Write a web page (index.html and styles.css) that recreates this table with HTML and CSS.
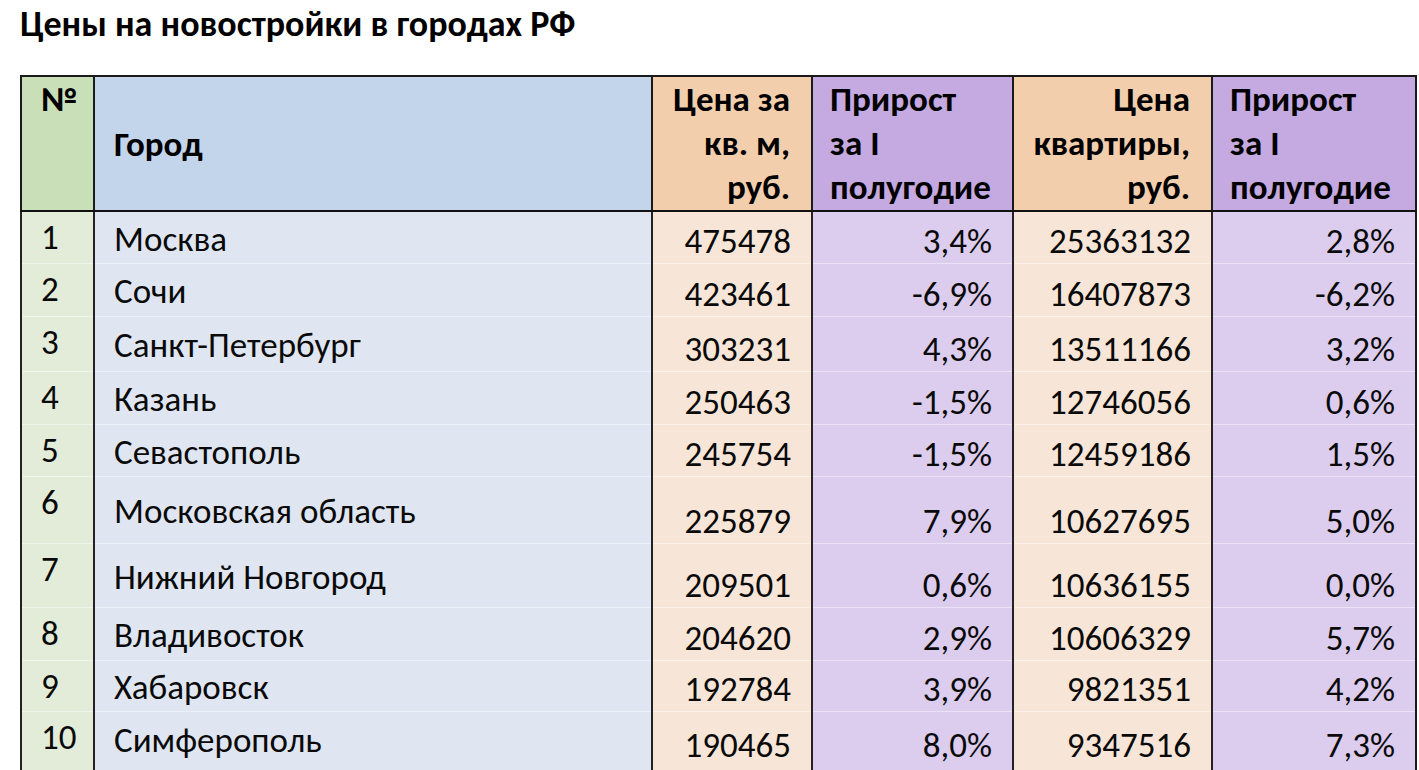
FILE: index.html
```html
<!DOCTYPE html>
<html lang="ru">
<head>
<meta charset="utf-8">
<title>Цены на новостройки в городах РФ</title>
<link rel="stylesheet" href="styles.css">
</head>
<body>
<div class="page">
  <h1 class="title">Цены на новостройки в городах РФ</h1>
  <table class="prices">
    <colgroup>
      <col class="w-num"><col class="w-city"><col class="w-price"><col class="w-grow"><col class="w-flat"><col class="w-grow2">
    </colgroup>
    <thead>
      <tr>
        <th class="h-num">№</th>
        <th class="h-city">Город</th>
        <th class="h-price">Цена за<br>кв. м,<br>руб.</th>
        <th class="h-grow">Прирост<br>за I<br>полугодие</th>
        <th class="h-price">Цена<br>квартиры,<br>руб.</th>
        <th class="h-grow">Прирост<br>за I<br>полугодие</th>
      </tr>
    </thead>
    <tbody>
      <tr class="r52"><td class="num">1</td><td class="city">Москва</td><td class="price">475478</td><td class="grow">3,4%</td><td class="price">25363132</td><td class="grow">2,8%</td></tr>
      <tr class="r53"><td class="num">2</td><td class="city">Сочи</td><td class="price">423461</td><td class="grow">-6,9%</td><td class="price">16407873</td><td class="grow">-6,2%</td></tr>
      <tr class="r55"><td class="num">3</td><td class="city">Санкт-Петербург</td><td class="price">303231</td><td class="grow">4,3%</td><td class="price">13511166</td><td class="grow">3,2%</td></tr>
      <tr class="r53"><td class="num">4</td><td class="city">Казань</td><td class="price">250463</td><td class="grow">-1,5%</td><td class="price">12746056</td><td class="grow">0,6%</td></tr>
      <tr class="r52"><td class="num">5</td><td class="city">Севастополь</td><td class="price">245754</td><td class="grow">-1,5%</td><td class="price">12459186</td><td class="grow">1,5%</td></tr>
      <tr class="r67"><td class="num">6</td><td class="city">Московская область</td><td class="price">225879</td><td class="grow">7,9%</td><td class="price">10627695</td><td class="grow">5,0%</td></tr>
      <tr class="r64"><td class="num">7</td><td class="city">Нижний Новгород</td><td class="price">209501</td><td class="grow">0,6%</td><td class="price">10636155</td><td class="grow">0,0%</td></tr>
      <tr class="r53"><td class="num">8</td><td class="city">Владивосток</td><td class="price">204620</td><td class="grow">2,9%</td><td class="price">10606329</td><td class="grow">5,7%</td></tr>
      <tr class="r51"><td class="num">9</td><td class="city">Хабаровск</td><td class="price">192784</td><td class="grow">3,9%</td><td class="price">9821351</td><td class="grow">4,2%</td></tr>
      <tr class="r-last"><td class="num">10</td><td class="city city-last">Симферополь</td><td class="price price-last">190465</td><td class="grow price-last">8,0%</td><td class="price price-last">9347516</td><td class="grow price-last">7,3%</td></tr>
    </tbody>
  </table>
</div>
</body>
</html>
```

FILE: styles.css
```css
html, body {
  margin: 0;
  padding: 0;
  background: #ffffff;
}

body {
  font-family: Carlito, Calibri, Lato, "Liberation Sans", sans-serif;
  color: #0a0a0a;
}

.page {
  padding: 0 0 0 20px;
}

.title {
  margin: 0;
  font-size: 36px;
  line-height: 48px;
  font-weight: 700;
  color: #000;
}

.prices {
  margin-top: 27px;
  border-collapse: collapse;
  table-layout: fixed;
  width: 1395px;
  font-size: 35px;
  border: 2px solid #1a1a1a;
}

.w-num { width: 73px; }
.w-city { width: 558px; }
.w-price { width: 160px; }
.w-grow { width: 201px; }
.w-flat { width: 199px; }
.w-grow2 { width: 204px; }

.prices th {
  font-weight: 700;
  line-height: 44px;
  height: 133px;
  padding: 0 19px 0 19px;
  border-left: 2px solid #1a1a1a;
  border-bottom: 2px solid #111;
  white-space: nowrap;
  color: #000;
}

.h-num {
  background: #c9dfb7;
  vertical-align: top;
  text-align: left;
}

.h-city {
  background: #c3d5eb;
  vertical-align: middle;
  text-align: left;
}

.h-price {
  background: #f3cead;
  vertical-align: top;
  text-align: right;
}

.prices th.h-price {
  padding-right: 21px;
}

.prices th.h-grow {
  padding-left: 17px;
}

.h-grow {
  background: #c5a9e1;
  vertical-align: top;
  text-align: left;
}

.prices td {
  line-height: 40px;
  padding: 0 19px;
  border-left: 2px solid #222;
  border-top: 1px solid rgba(255, 255, 255, 0.45);
  white-space: nowrap;
}

.r51 { height: 51px; }
.r52 { height: 52px; }
.r53 { height: 53px; }
.r55 { height: 55px; }
.r64 { height: 64px; }
.r67 { height: 67px; }
.r-last { height: 80px; }

.num {
  background: #e3ecd9;
  vertical-align: top;
  text-align: left;
}

.prices td.num {
  padding-top: 5px;
}

.city {
  background: #dfe6f1;
  vertical-align: middle;
  text-align: left;
}

.prices td.city {
  padding-top: 3px;
}

.prices td.city-last {
  vertical-align: top;
  padding-top: 8px;
}

.price {
  background: #f7e6d7;
  vertical-align: bottom;
  text-align: right;
}

.grow {
  background: #dccdee;
  vertical-align: bottom;
  text-align: right;
}

.prices td.price,
.prices td.grow {
  padding-bottom: 2px;
  padding-right: 20px;
}

.prices td.price-last {
  vertical-align: top;
  padding-top: 13px;
}
```
